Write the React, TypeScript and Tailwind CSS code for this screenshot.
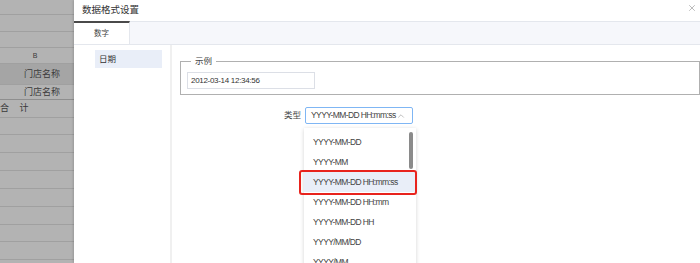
import React from "react";
import { ChevronUp, X } from "lucide-react";

const sheetRows = [
  { h: "h-[15px]" },
  { h: "h-[17px]" },
  { h: "h-[16px]" },
  { h: "h-[16px]", text: "B", center: true },
  { h: "h-[21px]", text: "门店名称", dark: true },
  { h: "h-[15px]", text: "门店名称", strong: true },
  { h: "h-[18px]", text: "合 计", left: true },
  { h: "h-[17px]" },
  { h: "h-[18px]" },
  { h: "h-[18px]" },
  { h: "h-[18px]" },
  { h: "h-[18px]" },
  { h: "h-[18px]" },
  { h: "h-[17px]" },
  { h: "h-[18px]" },
];

const formats = [
  "YYYY-MM-DD",
  "YYYY-MM",
  "YYYY-MM-DD HH:mm:ss",
  "YYYY-MM-DD HH:mm",
  "YYYY-MM-DD HH",
  "YYYY/MM/DD",
  "YYYY/MM",
];

const App = () => {
  return (
    <div className="flex h-[263px] w-[700px] overflow-hidden bg-white font-['Liberation_Sans','Noto_Sans_CJK_SC',sans-serif] text-[#333]">
      {/* Sheet behind the mask */}
      <div className="w-[74px] shrink-0 bg-[#b3b3b3]">
        {sheetRows.map((r, i) => (
          <div
            key={i}
            className={`flex items-center border-b ${r.h} ${r.strong ? "border-[#8e8e8e]" : "border-[#a0a0a0]"} ${r.dark ? "bg-[#a5a5a5]" : ""} ${r.center ? "justify-center pr-[4px]" : r.left ? "justify-start" : "justify-end pr-[14px]"}`}>
            {r.text && (
              <span className={`${r.center ? "text-[7px]" : "text-[9px]"} leading-none text-[#3a3a3a] ${r.left ? "whitespace-pre tracking-[4px]" : ""}`}>
                {r.text}
              </span>
            )}
          </div>
        ))}
      </div>

      {/* Dialog */}
      <div className="flex flex-1 flex-col bg-white shadow-[-1px_0_2px_rgba(0,0,0,0.15)]">
        <div className="flex h-[21px] items-center justify-between pl-[8px] pr-[3px]">
          <span className="text-[9.5px] text-[#333]">数据格式设置</span>
          <X size={10} strokeWidth={1.4} className="-mt-[6px] text-[#8a8a8a]" />
        </div>

        <div className="flex h-[24px] border-b border-t border-[#e4e7ed] bg-[#f6f7fb]">
          <div className="-mt-px flex w-[56px] items-center justify-center border-r border-t-2 border-r-[#e4e7ed] border-t-[#4a4a4a] bg-white">
            <span className="text-[7.5px] text-[#444]">数字</span>
          </div>
        </div>

        <div className="flex flex-1">
          <div className="w-[98px] shrink-0 border-r-2 border-[#f0f0f0] pl-[21px] pr-[8px] pt-[5px]">
            <div className="flex h-[18px] items-center bg-[#e9eef8] pl-[4px]">
              <span className="text-[8.5px] text-[#333]">日期</span>
            </div>
          </div>

          <div className="flex-1 pl-[8px]">
            <fieldset className="mt-[10px] h-[40px] border border-[#b0b0b0] pl-[6px] pr-px">
              <legend className="ml-[4px] px-[4px] text-[8.5px] leading-[12px] text-[#444]">示例</legend>
              <div className="mt-[5px] flex h-[17px] w-[128px] items-center border border-[#dcdfe6] pl-[3px]">
                <span className="text-[8px] tracking-[-0.3px] text-[#333]">2012-03-14 12:34:56</span>
              </div>
            </fieldset>

            <div className="mt-[12px] flex items-center">
              <span className="ml-[104px] w-[20px] text-[8.5px] text-[#444]">类型</span>
              <div className="relative ml-[1px]">
                <div className="flex h-[17px] w-[108px] items-center justify-between rounded-[2px] border border-[#7fb6f4] pl-[5px] pr-[6px]">
                  <span className="text-[8.5px] tracking-[-0.6px] text-[#444]">YYYY-MM-DD HH:mm:ss</span>
                  <ChevronUp size={10} strokeWidth={1.5} className="text-[#9a9a9a]" />
                </div>

                {/* Options */}
                <div className="absolute -left-[1px] top-[21px] w-[112px] bg-white pt-[4px] shadow-[0_1px_4px_rgba(0,0,0,0.18)]">
                  {formats.map((f, i) => (
                    <div
                      key={f}
                      className={`relative flex h-[20px] items-center pl-[9px] ${i === 2 ? "bg-[#e9eef8]" : ""}`}>
                      <span className="text-[8.5px] tracking-[-0.6px] text-[#444]">{f}</span>
                      {i === 2 && (
                        <span className="absolute -bottom-[3px] -left-[5px] -right-px -top-[2px] rounded-[3px] border-2 border-[#e8231d]" />
                      )}
                    </div>
                  ))}
                  <div className="absolute right-[3px] top-[4px] h-[37px] w-[4px] rounded-full bg-[#8a8a8a]" />
                </div>
              </div>
            </div>
          </div>
        </div>
      </div>
    </div>
  );
};

export default App;
